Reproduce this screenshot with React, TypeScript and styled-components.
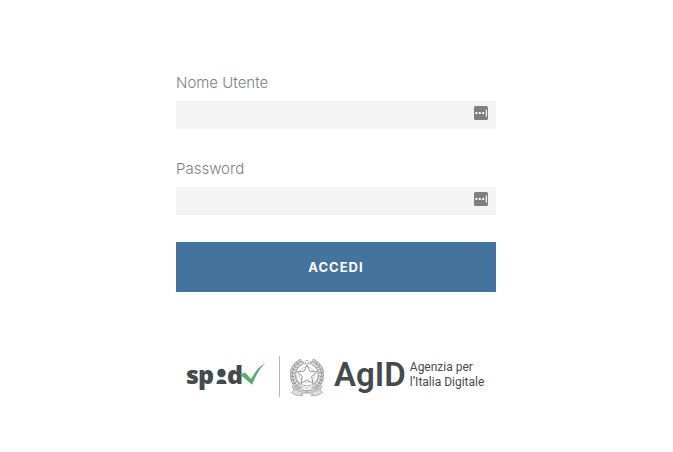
import React, { useState } from "react";
import styled, { createGlobalStyle } from "styled-components";

const GlobalStyle = createGlobalStyle`
  *, *::before, *::after { box-sizing: border-box; }
  body {
    margin: 0;
    background: #ffffff;
    font-family: Inter, "Open Sans", sans-serif;
  }
`;

const Page = styled.main`
  display: flex;
  flex-direction: column;
  align-items: center;
  padding: 72px 17px 40px 16px;
`;

const LoginForm = styled.form`
  display: flex;
  flex-direction: column;
  gap: 27px;
  width: 100%;
  max-width: 320px;
`;

const Fields = styled.div`
  display: flex;
  flex-direction: column;
  gap: 29px;
`;

const Field = styled.div`
  display: flex;
  flex-direction: column;
  gap: 7px;
`;

const Label = styled.label`
  font-size: 15px;
  line-height: 22px;
  font-weight: 300;
  color: #808080;
`;

const InputBox = styled.div`
  display: flex;
  background: #f3f3f3;
  padding-right: 8px;
`;

const TextInput = styled.input`
  flex: 1;
  min-width: 0;
  height: 28px;
  padding: 0 8px;
  border: 0;
  background: transparent;
  font: inherit;
  font-size: 15px;
  color: #444444;
  outline: none;
`;

const FillButton = styled.button`
  display: flex;
  align-self: flex-start;
  margin-top: 5px;
  padding: 0;
  border: 0;
  background: none;
  cursor: pointer;
`;

const SubmitButton = styled.button`
  height: 50px;
  border: 0;
  background: #44739e;
  color: #ffffff;
  font: inherit;
  font-size: 13px;
  font-weight: 700;
  letter-spacing: 1px;
  text-transform: uppercase;
  cursor: pointer;
`;

const Logos = styled.footer`
  display: flex;
  align-items: center;
  width: 100%;
  max-width: 320px;
  margin-top: 64px;
  padding-left: 10px;
  color: #454a4d;
  font-family: Roboto, sans-serif;
`;

const Divider = styled.span`
  flex: none;
  width: 1px;
  height: 41px;
  margin: 0 10px 0 12px;
  background: #b4b7b9;
`;

const AgencyMark = styled.span`
  margin-left: 10px;
  padding-bottom: 3px;
  font-size: 33px;
  line-height: 38px;
  font-weight: 600;
`;

const AgencyName = styled.span`
  margin-left: 4px;
  padding-bottom: 3px;
  font-size: 12px;
  line-height: 15px;
  white-space: nowrap;
`;

const Drawing = styled.svg`
  display: block;
  flex: none;
`;

function FillIcon() {
  return (
    <Drawing width="14" height="14" viewBox="0 0 14 14" aria-hidden="true">
      <rect width="14" height="14" rx="1.5" fill="#7f7f7f" />
      <g fill="#ffffff">
        <rect x="1.4" y="6" width="2" height="2" rx=".6" />
        <rect x="4.8" y="6" width="2" height="2" rx=".6" />
        <rect x="8.2" y="6" width="2" height="2" rx=".6" />
        <rect x="11.8" y="3.6" width="1.2" height="7" />
      </g>
    </Drawing>
  );
}

function SpidLogo() {
  return (
    <Drawing width="81" height="41" viewBox="0 0 81 41" role="img" aria-label="spid">
      <g fill="#454a4d" fontFamily="Noto Sans, sans-serif" fontWeight="900" fontSize="25">
        <text x="0" y="28">s</text>
        <text x="12" y="28">p</text>
        <text x="41" y="28">d</text>
      </g>
      <circle cx="35.5" cy="17" r="4.2" fill="#454a4d" />
      <path d="M30.500 28c0-3.400 2-4.500 5-4.500s5 1.100 5 4.500z" fill="#454a4d" />
      <path
        d="M54 18.500l5.200-2 5.800 6.500C69 15.500 73.500 10.500 79.500 6.500c-6 6.300-9.800 13-13.400 22.300z"
        fill="#5cab6c"
      />
    </Drawing>
  );
}

function starPoints(cx: number, cy: number, outer: number, inner: number) {
  return Array.from({ length: 10 }, (_, i) => {
    const r = i % 2 ? inner : outer;
    const a = (Math.PI * (i - 2.5)) / 5;
    return `${cx + r * Math.cos(a)},${cy + r * Math.sin(a)}`;
  }).join(" ");
}

function Emblem() {
  const teeth = Array.from({ length: 16 }, (_, i) => i * 22.5);
  const leaves = Array.from({ length: 9 }, (_, i) => 122 + i * 14);
  return (
    <Drawing width="34" height="41" viewBox="0 0 35 41" role="img" aria-label="Repubblica Italiana">
      <g fill="none" stroke="#8a8a8a" strokeWidth=".5">
        {teeth.map((a) => (
          <path key={a} d="M15.800 7l.4-3h2.600l.4 3" transform={`rotate(${a} 17.500 18.500)`} />
        ))}
        <circle cx="17.500" cy="18.500" r="11.500" stroke="#777777" />
        <circle cx="17.500" cy="18.500" r="8" stroke="#a0a0a0" />
        <polygon
          points={starPoints(17.5, 19, 10.5, 5)}
          fill="#ffffff"
          stroke="#777777"
          strokeWidth=".8"
          strokeLinejoin="round"
        />
        {[0, 1].map((side) => (
          <g key={side} transform={side ? "translate(35 0) scale(-1 1)" : undefined} stroke="#777777">
            <path d="M16 35C8 33 2.500 27 2.500 19.500 2.500 12 6 6 11 3" />
            {leaves.map((a) => (
              <g key={a} transform={`translate(17.500 19) rotate(${a}) translate(14.500 0)`}>
                <path d="M0-1C3-1 4 1.500 2 4.500 0 3-1 1 0-1z" fill="#d0d0d0" />
                <path d="M0-1C-3-1-3 1.500-2 4.500 0 3 1 1 0-1z" fill="#e8e8e8" />
              </g>
            ))}
            <path d="M2 30c2 3 5 4 9 4.500l6.500.5v2.500l-6 .5 2 2c-5 .8-9-.5-12-3l2.500-2z" fill="#dedede" />
            <path d="M4 33c3 3 7 3.500 13 3.500" strokeDasharray="1.200 .8" />
          </g>
        ))}
      </g>
    </Drawing>
  );
}

type LoginFieldProps = { id: string; label: string; type: string; autoComplete: string };

function LoginField({ id, label, type, autoComplete }: LoginFieldProps) {
  const [value, setValue] = useState("");
  return (
    <Field>
      <Label htmlFor={id}>{label}</Label>
      <InputBox>
        <TextInput
          id={id}
          name={id}
          type={type}
          autoComplete={autoComplete}
          value={value}
          onChange={(e) => setValue(e.target.value)}
        />
        <FillButton type="button" aria-label={label}>
          <FillIcon />
        </FillButton>
      </InputBox>
    </Field>
  );
}

export default function App() {
  return (
    <>
      <GlobalStyle />
      <Page>
        <LoginForm onSubmit={(e) => e.preventDefault()}>
          <Fields>
            <LoginField id="username" label="Nome Utente" type="text" autoComplete="username" />
            <LoginField id="password" label="Password" type="password" autoComplete="current-password" />
          </Fields>
          <SubmitButton type="submit">Accedi</SubmitButton>
        </LoginForm>
        <Logos>
          <SpidLogo />
          <Divider />
          <Emblem />
          <AgencyMark>AgID</AgencyMark>
          <AgencyName>
            Agenzia per
            <br />
            l’Italia Digitale
          </AgencyName>
        </Logos>
      </Page>
    </>
  );
}
